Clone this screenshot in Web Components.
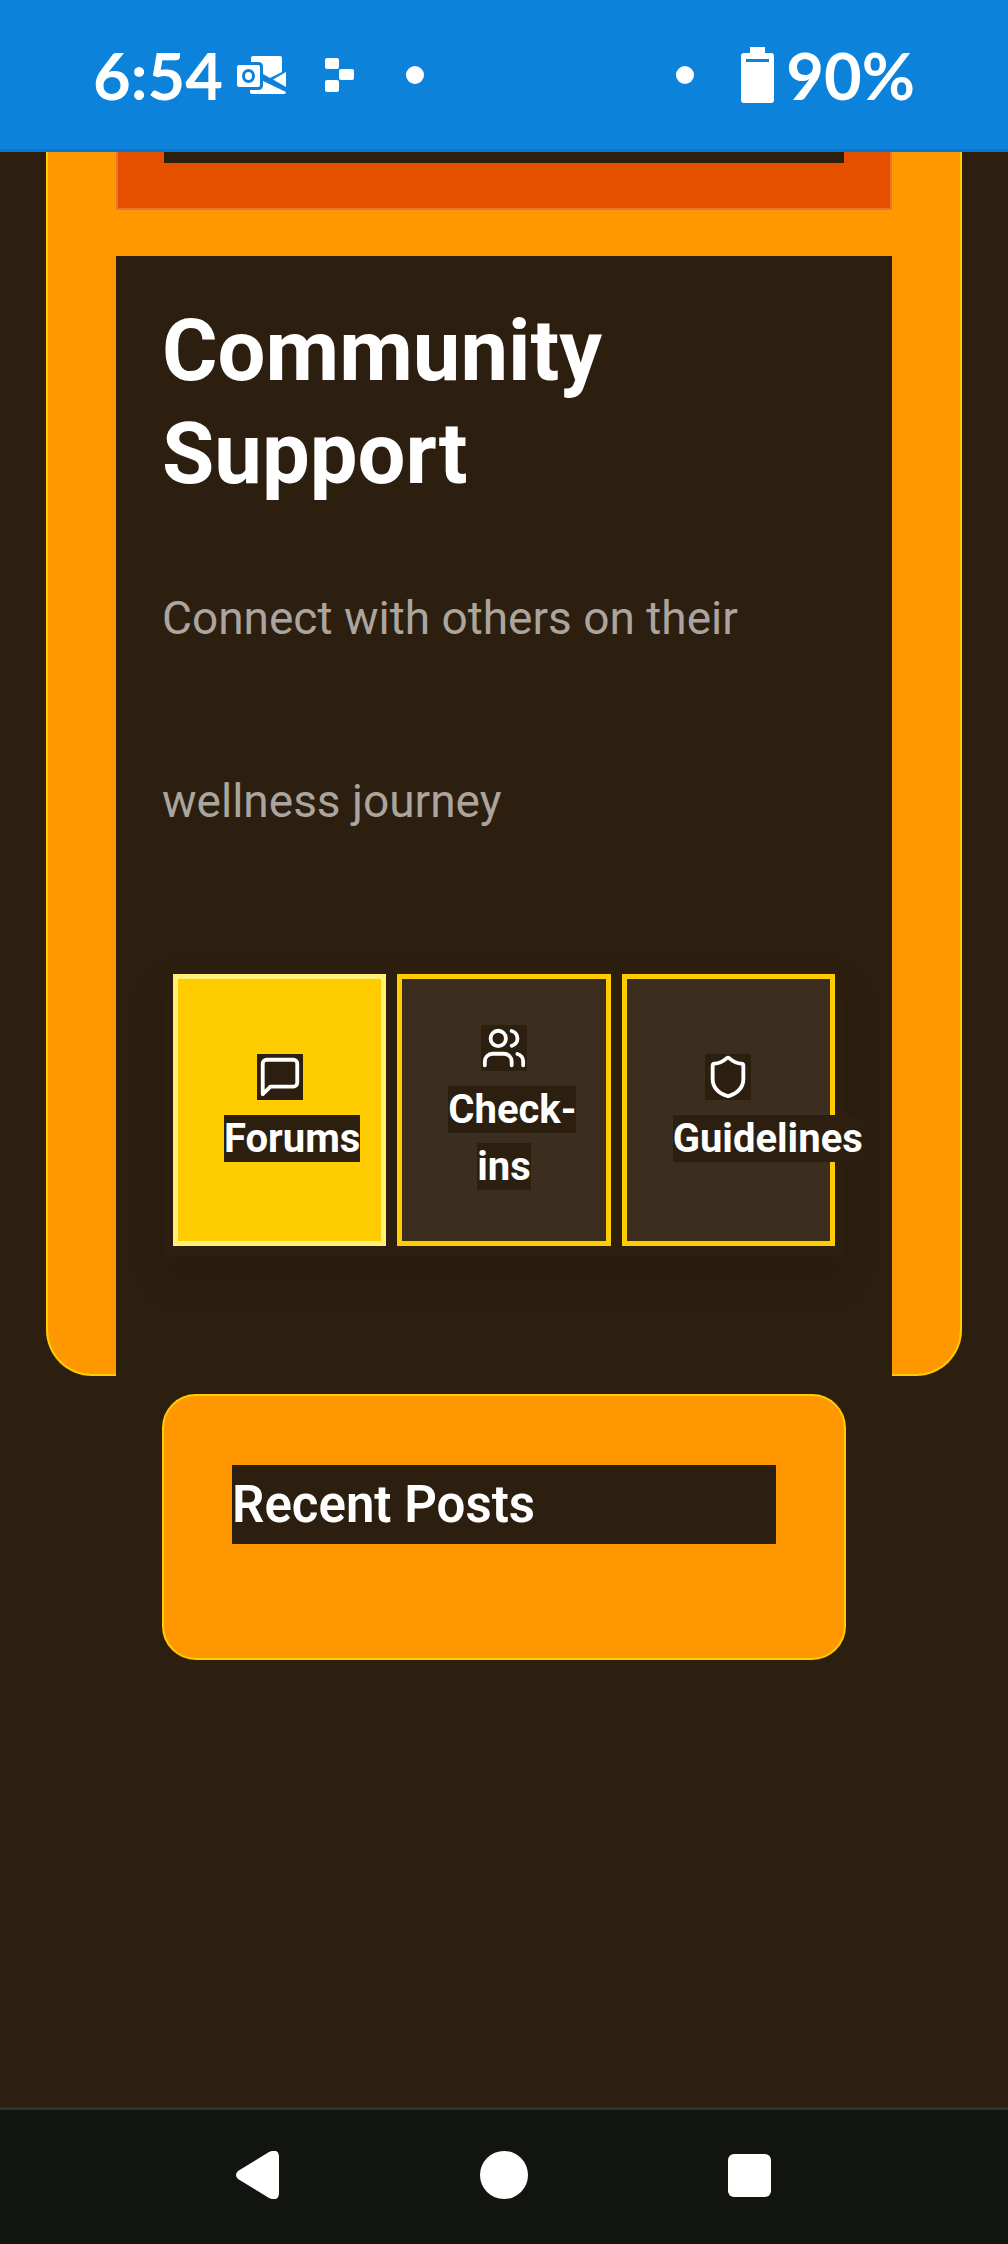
<!DOCTYPE html>
<html lang="en">
<head>
<meta charset="utf-8">
<meta name="viewport" content="width=device-width">
<title>Community Support</title>
<style>
  html { background: #2c1f10; }
  body { margin: 0; min-height: 100vh; display: flex; flex-direction: column; color: #fff; font-family: Roboto, "Liberation Sans", sans-serif; }
</style>
</head>
<body>
<status-bar time="6:54" battery="90%"></status-bar>
<app-main>
  <wellness-card>
    <feature-tile></feature-tile>
    <support-panel heading="Community Support">
      Connect with others on their wellness journey
      <tab-strip slot="tabs">
        <tab-button icon="message" active>Forums</tab-button>
        <tab-button icon="users">Check-ins</tab-button>
        <tab-button icon="shield">Guidelines</tab-button>
      </tab-strip>
    </support-panel>
  </wellness-card>
  <posts-card>Recent Posts</posts-card>
</app-main>
<nav-bar></nav-bar>

<script>
const define = (name, html, setup) => {
  customElements.define(name, class extends HTMLElement {
    constructor() {
      super();
      this.attachShadow({ mode: 'open' }).innerHTML = html;
    }
    connectedCallback() {
      if (setup) setup(this, this.shadowRoot);
    }
  });
};

define('status-bar', `
  <style>
    :host { display: flex; justify-content: space-between; align-items: center; box-sizing: border-box; height: 152px; padding: 0 93px; background: #0d82db; border-bottom: 3px solid #0b76c9; font: 700 65px/76px Lato, sans-serif; }
    div { display: flex; align-items: center; }
    svg { display: block; fill: #fff; }
    .mail { margin-left: 14px; }
    .blocks { margin-left: 38px; }
    .dot { margin-left: 52px; }
    .battery { margin: 0 12px 0 47px; }
  </style>
  <div>
    <span id="time"></span>
    <svg class="mail" width="50" height="38" viewBox="0 0 50 38">
      <path d="M14 6V2q0-2 2-2h27q2 0 2 2v14L33 22l-7-4V11q0-5-5-5z"/>
      <path d="M49 16v15L36 23.500z"/>
      <path d="M13 34h8q5 0 5-5v-4l23 11q0 2-2 2H15q-2 0-2-2z"/>
      <path fill-rule="evenodd" d="M2 9h19q2 0 2 2v18q0 2-2 2H2q-2 0-2-2V11q0-2 2-2zM11.500 13a6.500 7 0 1 0 0 14a6.500 7 0 1 0 0-14zM11.500 16a3.500 4 0 1 1 0 8a3.500 4 0 1 1 0-8z"/>
    </svg>
    <svg class="blocks" width="29" height="34" viewBox="0 0 29 34">
      <rect width="14" height="11" rx="2"/><rect x="14" y="11" width="15" height="11" rx="2"/><rect y="22" width="14" height="12" rx="2"/>
    </svg>
    <svg class="dot" width="18" height="18"><circle cx="9" cy="9" r="9"/></svg>
  </div>
  <div>
    <svg width="18" height="18"><circle cx="9" cy="9" r="9"/></svg>
    <svg class="battery" width="33" height="56" viewBox="0 0 33 56">
      <path fill-rule="evenodd" d="M9 0h15v6h6q3 0 3 3v44q0 3-3 3H3q-3 0-3-3V9q0-3 3-3h6zM5 12v3h23v-3z"/>
    </svg>
    <span id="battery"></span>
  </div>`, (host, root) => {
    root.getElementById('time').textContent = host.getAttribute('time');
    root.getElementById('battery').textContent = host.getAttribute('battery');
  });

define('app-main', `
  <style>
    :host { display: block; flex: 1; padding: 0 46px; }
  </style>
  <slot></slot>`);

define('wellness-card', `
  <style>
    :host { display: block; padding: 0 68px; background: #ff9800; border: 2px solid #fc0; border-top: 0; border-radius: 0 0 46px 46px; }
  </style>
  <slot></slot>`);

define('feature-tile', `
  <style>
    :host { display: block; padding: 0 46px 45px; background: #e65100; border: 2px solid #eb7333; border-top: 0; margin-bottom: 46px; }
    div { height: 11px; background: #2c1f10; }
  </style>
  <div></div>`);

define('support-panel', `
  <style>
    :host { display: block; padding: 44px 46px 119px; margin-bottom: -2px; background: #2c1f10; }
    h2 { margin: 0 0 21px; font-size: 85px; line-height: 103px; font-weight: 700; }
    p { margin: 0 0 70px; font-size: 46px; line-height: 183px; color: #aba59f; }
  </style>
  <h2></h2>
  <p><slot></slot></p>
  <slot name="tabs"></slot>`, (host, root) => {
    root.querySelector('h2').textContent = host.getAttribute('heading');
  });

define('tab-strip', `
  <style>
    :host { display: grid; grid-template-columns: repeat(3, minmax(0, 1fr)); gap: 11px; padding: 11px; box-shadow: 0 23px 34px rgba(0, 0, 0, .1); }
  </style>
  <slot></slot>`);

const icons = {
  message: '<path d="M21 15a2 2 0 0 1-2 2H7l-4 4V5a2 2 0 0 1 2-2h14a2 2 0 0 1 2 2z"/>',
  users: '<path d="M16 21v-2a4 4 0 0 0-4-4H6a4 4 0 0 0-4 4v2"/><circle cx="9" cy="7" r="4"/><path d="M22 21v-2a4 4 0 0 0-3-3.870M16 3.130a4 4 0 0 1 0 7.750"/>',
  shield: '<path d="M20 13c0 5-3.500 7.500-7.660 8.950a1 1 0 0 1-.67-.01C7.500 20.500 4 18 4 13V6a1 1 0 0 1 1-1c2 0 4.500-1.200 6.240-2.720a1.170 1.170 0 0 1 1.520 0C14.510 3.810 17 5 19 5a1 1 0 0 1 1 1z"/>'
};

define('tab-button', `
  <style>
    :host { display: flex; min-width: 0; }
    button { flex: 1; min-width: 0; display: flex; flex-direction: column; align-items: center; justify-content: center; gap: 10px; margin: 0; padding: 46px; background: #3c2e1e; border: 5px solid #fc0; border-radius: 0; color: #fff; font: 700 40px/57px Roboto, "Liberation Sans", sans-serif; }
    :host([active]) button { background: #fc0; border-color: #fff176; }
    svg { flex: none; display: block; width: 46px; height: 46px; background: #2c1f10; fill: none; stroke: #fff; stroke-width: 2; stroke-linecap: round; stroke-linejoin: round; }
    div { width: 100%; text-align: center; }
    span { background: #2c1f10; }
  </style>
  <button type="button"><svg viewBox="0 0 24 24"></svg><div><span><slot></slot></span></div></button>`, (host, root) => {
    root.querySelector('svg').innerHTML = icons[host.getAttribute('icon')];
  });

define('posts-card', `
  <style>
    :host { display: block; margin: 18px 116px 0; padding: 69px 68px 114px; background: #ff9800; border: 2px solid #fc0; border-radius: 34px; }
    h3 { margin: 0; background: #2c1f10; font-size: 51px; line-height: 79px; font-weight: 600; }
  </style>
  <h3><slot></slot></h3>`);

define('nav-bar', `
  <style>
    :host { display: block; background: #121410; border-top: 3px solid #2b322e; }
    nav { display: flex; justify-content: center; gap: 198px; padding: 41px 0 45px; }
    button { display: block; margin: 0; padding: 0; border: 0; background: none; }
    svg { display: block; fill: #fff; }
  </style>
  <nav>
    <button type="button" aria-label="Back"><svg width="48" height="48"><path d="M4 20Q0 24 4 28L35 47Q44 51 45 43V5Q44-3 35 1z"/></svg></button>
    <button type="button" aria-label="Home"><svg width="48" height="48"><circle cx="24" cy="24" r="24"/></svg></button>
    <button type="button" aria-label="Recent apps"><svg width="48" height="48"><rect x="2" y="3" width="43" height="43" rx="6"/></svg></button>
  </nav>`);
</script>
</body>
</html>
